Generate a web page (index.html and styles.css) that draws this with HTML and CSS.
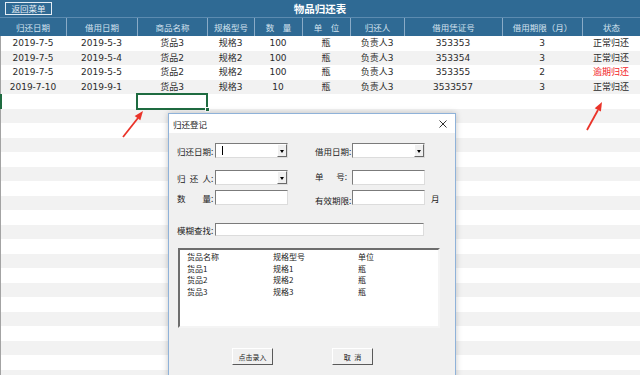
FILE: index.html
```html
<!DOCTYPE html>
<html>
<head>
<meta charset="utf-8">
	<title>物品归还表</title>

	<link rel="stylesheet" href="styles.css">
</head>
<body>

<div class="sheet">
	<div class="title-bar">
		<button class="back-btn">返回菜单</button>
		<h1 class="title">物品归还表</h1>
		<span></span>
	</div>

	<div class="cols head">
		<div>归还日期</div>
		<div>借用日期</div>
		<div>商品名称</div>
		<div>规格型号</div>
		<div>数&emsp;量</div>
		<div>单&emsp;位</div>
		<div>归还人</div>
		<div>借用凭证号</div>
		<div>借用期限（月）</div>
		<div>状态</div>
	</div>

	<div class="rows">
		<div class="cols row">
			<div>2019-7-5</div><div>2019-5-3</div><div>货品3</div><div>规格3</div><div>100</div>
			<div>瓶</div><div>负责人3</div><div>353353</div><div>3</div><div>正常归还</div>
		</div>
		<div class="cols row">
			<div>2019-7-5</div><div>2019-5-4</div><div>货品2</div><div>规格2</div><div>100</div>
			<div>瓶</div><div>负责人3</div><div>353354</div><div>3</div><div>正常归还</div>
		</div>
		<div class="cols row">
			<div>2019-7-5</div><div>2019-5-5</div><div>货品2</div><div>规格2</div><div>100</div>
			<div>瓶</div><div>负责人3</div><div>353355</div><div>2</div><div class="late">逾期归还</div>
		</div>
		<div class="cols row">
			<div>2019-7-10</div><div>2019-9-1</div><div>货品3</div><div>规格3</div><div>10</div>
			<div>瓶</div><div>负责人3</div><div>3533557</div><div>3</div><div>正常归还</div>
		</div>
		<div class="cols row active">
			<div></div><div></div><div class="sel"></div><div></div><div></div>
			<div></div><div></div><div></div><div></div><div></div>
		</div>
		<div class="row"></div>
		<div class="row"></div>
		<div class="row"></div>
		<div class="row"></div>
		<div class="row"></div>
		<div class="row"></div>
		<div class="row"></div>
		<div class="row"></div>
		<div class="row"></div>
		<div class="row"></div>
		<div class="row"></div>
		<div class="row"></div>
		<div class="row"></div>
		<div class="row"></div>
		<div class="row"></div>
		<div class="row"></div>
		<div class="row"></div>
		<div class="row"></div>
		<div class="row"></div>
	</div>

	<!-- callout arrows -->
	<svg class="arrows" width="640" height="375" viewBox="0 0 640 375">
		<line x1="123" y1="137" x2="138" y2="118" stroke="#ea3329" stroke-width="1.8"/>
		<polygon points="143,111 140.3,120.2 134.7,116" fill="#ea3329"/>
		<line x1="587" y1="130" x2="598" y2="110" stroke="#ea3329" stroke-width="1.8"/>
		<polygon points="602,102 600.9,111.6 594.7,108.3" fill="#ea3329"/>
	</svg>

	<div class="dialog">
		<div class="dlg-title">
			<span>归还登记</span>
			<svg class="close" width="8" height="8" viewBox="0 0 8 8">
				<path d="M0.5 0.5L7.5 7.5M7.5 0.5L0.5 7.5" stroke="#333" stroke-width="1"/>
			</svg>
		</div>
		<div class="dlg-body">
			<div class="form-row r1">
				<label class="lbl">归还日期:</label>
				<div class="combo"><span class="caret"></span><span class="drop"></span></div>
				<label class="lbl lbl-r">借用日期:</label>
				<div class="combo"><span class="drop"></span></div>
			</div>
			<div class="form-row r2">
				<label class="lbl">归&ensp;还&ensp;人:</label>
				<div class="combo"><span class="drop"></span></div>
				<label class="lbl lbl-r up">单&emsp;&ensp;号:</label>
				<div class="field"></div>
			</div>
			<div class="form-row r3">
				<label class="lbl">数&emsp;&emsp;量:</label>
				<div class="field"></div>
				<label class="lbl lbl-r down">有效期限:</label>
				<div class="field"></div>
				<span class="unit">月</span>
			</div>
			<div class="form-row r4">
				<label class="lbl">模糊查找:</label>
				<div class="field wide"></div>
			</div>

			<div class="listbox">
				<div class="list-row"><span>货品名称</span><span>规格型号</span><span>单位</span></div>
				<div class="list-row"><span>货品1</span><span>规格1</span><span>瓶</span></div>
				<div class="list-row"><span>货品2</span><span>规格2</span><span>瓶</span></div>
				<div class="list-row"><span>货品3</span><span>规格3</span><span>瓶</span></div>
			</div>

			<div class="buttons">
				<button class="btn">点击录入</button>
				<button class="btn">取&ensp;消</button>
			</div>
		</div>
	</div>
</div>

</body>
</html>
```

FILE: styles.css
```css
body{
	margin: 0;
	width: 640px;
	height: 375px;
	overflow: hidden;
	background: #fff;
	font-family: "DejaVu Sans", "Noto Sans CJK SC", sans-serif;
}
.sheet{
	position: relative;
	height: 375px;
}

/* top bar */
.title-bar{
	height: 17px;
	background: #2f6a94;
	display: grid;
	grid-template-columns: 1fr auto 1fr;
	align-items: center;
}
.back-btn{
	justify-self: start;
	margin-left: 5px;
	width: 47px;
	height: 13px;
	padding: 0;
	border: 1px solid #e4edf5;
	background: transparent;
	color: #e8f0f7;
	font: 8.5px/11px "Noto Sans CJK SC", sans-serif;
}
.title{
	margin: 0;
	color: #fff;
	font: bold 10.5px/17px "Noto Sans CJK SC", sans-serif;
}

/* grid columns */
.cols{
	display: grid;
	grid-template-columns: 66px 71px 70px 47px 48px 48px 54px 98px 80px 58px;
}
.head{
	height: 19px;
	box-sizing: border-box;
	background: #2f6a94;
	border-top: 1px solid #5c8bb0;
	color: #d3e2ef;
	font: 8.5px "Noto Sans CJK SC", sans-serif;
}
.head > div{
	display: flex;
	align-items: center;
	justify-content: center;
	border-left: 1px solid #8aabc7;
}
.head > div:first-child{
	border-left: 0;
}

.row{
	height: 14.5px;
	line-height: 14.5px;
	text-align: center;
	font-size: 9px;
	color: #2b2b2b;
	white-space: nowrap;
	box-shadow: inset 1px 0 #a3a3a3;
}
.rows .row:nth-child(even){
	background: #f2f2f2;
}
.rows .row.active{
	box-shadow: inset 2px 0 #1e6b40;
}
.late{
	color: #f2231f;
}
.sel{
	position: relative;
	outline: 2px solid #1e6b40;
	outline-offset: -1px;
}
.sel::after{
	content: "";
	position: absolute;
	right: -3px;
	bottom: -3px;
	width: 3px;
	height: 3px;
	background: #1e6b40;
	border: 1px solid #fff;
}

.arrows{
	position: absolute;
	left: 0;
	top: 0;
	pointer-events: none;
}

/* user form window */
.dialog{
	position: absolute;
	left: 168px;
	top: 113px;
	width: 288px;
	height: 275px;
	box-sizing: border-box;
	background: #f0f0f0;
	border: 1px solid #8fb2d9;
	box-shadow: 0 0 6px rgba(0,0,0,0.22);
	font-family: "Noto Sans CJK SC", sans-serif;
	font-size: 8.5px;
	color: #222;
}
.dlg-title{
	height: 19px;
	background: #fff;
	display: flex;
	align-items: center;
	justify-content: space-between;
	padding: 0 8px 0 4px;
	font-size: 8.5px;
}
.dlg-body{
	padding: 10px 0 0 8px;
}

.form-row{
	display: flex;
	align-items: center;
	height: 15px;
}
.r2{
	margin-top: 12px;
}
.r3{
	margin-top: 5px;
}
.r4{
	margin-top: 18px;
	height: 13px;
}
.lbl{
	width: 38px;
	white-space: nowrap;
}
.lbl-r{
	width: 37px;
	margin-left: 27px;
}
.up{
	position: relative;
	top: -2px;
}
.down{
	position: relative;
	top: 2px;
}
.unit{
	margin-left: 6px;
}

.combo,
.field{
	display: flex;
	align-items: center;
	width: 73px;
	height: 15px;
	box-sizing: border-box;
	background: #fff;
	border: 1px solid;
	border-color: #7b7b7b #dcdcdc #dcdcdc #7b7b7b;
}
.field.wide{
	width: 209px;
	height: 13px;
}
.caret{
	width: 1px;
	height: 9px;
	margin-left: 6px;
	background: #000;
}
.drop{
	display: flex;
	align-items: center;
	justify-content: center;
	margin-left: auto;
	width: 10px;
	height: 13px;
	box-sizing: border-box;
	background: #f0f0f0;
	border: 1px solid;
	border-color: #fff #6a6a6a #6a6a6a #fff;
}
.drop::after{
	content: "";
	border: 2.5px solid transparent;
	border-top: 3px solid #000;
	border-bottom: 0;
	margin-top: 1px;
}

.listbox{
	width: 262px;
	height: 80px;
	margin: 12px 0 0 1px;
	box-sizing: border-box;
	background: #fff;
	border: 2px solid;
	border-color: #6d6d6d #f4f4f4 #f4f4f4 #6d6d6d;
	padding: 1px 0 0 7px;
	font-size: 8px;
}
.list-row{
	display: grid;
	grid-template-columns: 86px 85px 1fr;
	height: 11.5px;
	line-height: 11.5px;
}

.buttons{
	display: flex;
	gap: 59px;
	margin: 20px 0 0 55px;
}
.btn{
	width: 41px;
	height: 17px;
	padding: 0;
	background: #f0f0f0;
	border: 1px solid;
	border-color: #fff #5a5a5a #5a5a5a #fff;
	font: 7px "Noto Sans CJK SC", sans-serif;
	color: #222;
}
```
